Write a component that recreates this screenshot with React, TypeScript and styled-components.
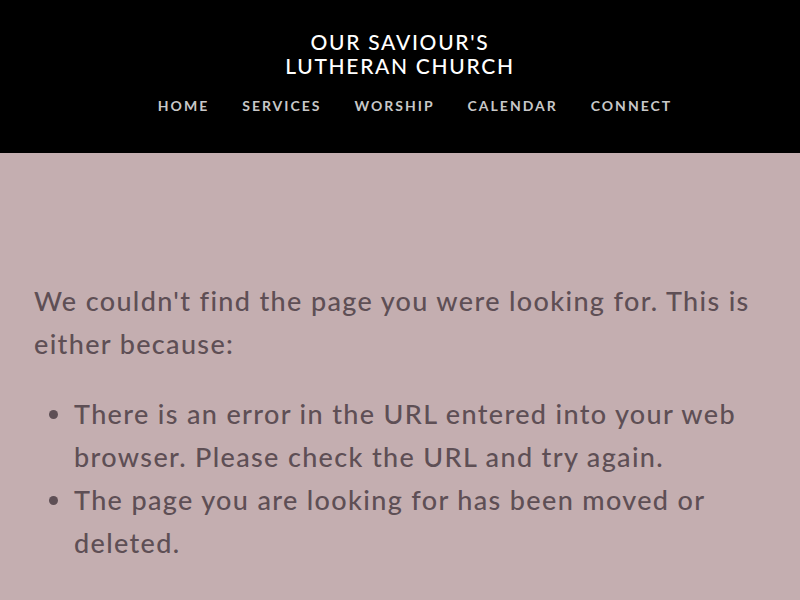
import styled, { createGlobalStyle } from 'styled-components';

const Global = createGlobalStyle`
  html, body { margin: 0; padding: 0; background: #c4aeb0; }
  body { font-family: Lato, 'Open Sans', sans-serif; }
`;

const Header = styled.header`
  background: #000; height: 153px; box-sizing: border-box;
  display: flex; flex-direction: column; align-items: center; padding-top: 30px;
`;
const SiteTitle = styled.div`
  color: #fff; font-size: 21px; line-height: 24px; letter-spacing: 1.7px;
  text-align: center; text-transform: uppercase; font-weight: 500;
`;
const Nav = styled.nav`display: flex; gap: 33px; margin-top: 18px; padding-left: 30px;`;
const NavLink = styled.a`
  color: #c8c8c8; font-size: 14px; font-weight: 700; letter-spacing: 2px;
  text-transform: uppercase; line-height: 20px; text-decoration: none;
`;

const Main = styled.main`
  padding: 126px 34px 0; color: #5e4f55;
  font-size: 27px; line-height: 43px; font-weight: 500; letter-spacing: 1.35px;
`;
const Para = styled.p`margin: 0 0 27px;`;
const List = styled.ul`margin: 0; padding-left: 40px;`;

export default function App() {
  return (
    <>
      <Global />
      <Header>
        <SiteTitle>Our Saviour's<br />Lutheran Church</SiteTitle>
        <Nav>
          {['Home', 'Services', 'Worship', 'Calendar', 'Connect'].map((n) => (
            <NavLink key={n}>{n}</NavLink>
          ))}
        </Nav>
      </Header>
      <Main>
        <Para>We couldn't find the page you were looking for. This is either because:</Para>
        <List>
          <li>There is an error in the URL entered into your web browser. Please check the URL and try again.</li>
          <li>The page you are looking for has been moved or deleted.</li>
        </List>
      </Main>
    </>
  );
}
